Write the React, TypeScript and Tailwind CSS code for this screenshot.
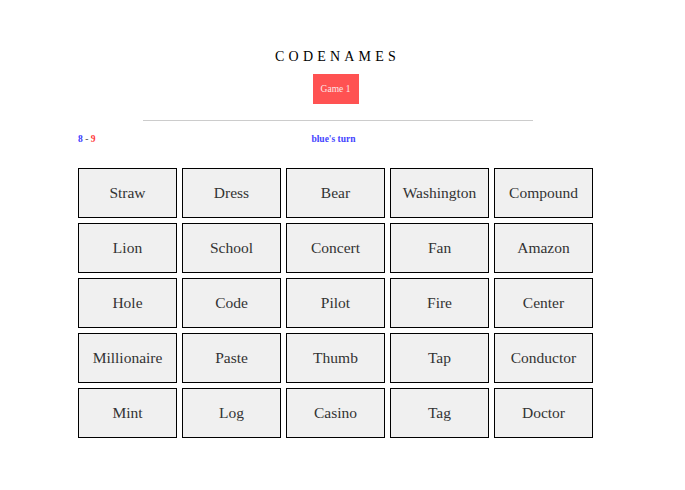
import React from "react";

const words = [
  "Straw", "Dress", "Bear", "Washington", "Compound",
  "Lion", "School", "Concert", "Fan", "Amazon",
  "Hole", "Code", "Pilot", "Fire", "Center",
  "Millionaire", "Paste", "Thumb", "Tap", "Conductor",
  "Mint", "Log", "Casino", "Tag", "Doctor",
];

export default function App() {
  return (
    <div className="min-h-[490px] w-full bg-white" style={{ fontFamily: '"Liberation Serif", serif' }}>
      <div className="ml-[78px] w-[515px] pt-[49px]">
        <div className="flex flex-col items-center">
          <h1 className="text-[14px] leading-[16px] tracking-[4.2px] pl-[4px] text-black">CODENAMES</h1>
          <button className="mt-[9px] h-[30px] w-[46px] bg-[#ff5252] text-[9.5px] text-[#fde8e8]">Game 1</button>
        </div>
        <div className="ml-[65px] mt-[16px] h-px w-[390px] bg-[#cccccc]" />
        <div className="mt-[11px] grid grid-cols-3 text-[9.5px] font-bold leading-[14px]">
          <div>
            <span className="text-[#3a3aff]">8</span>
            <span className="text-[#666]"> - </span>
            <span className="text-[#ff3a3a]">9</span>
          </div>
          <div className="pr-[4px] text-center text-[#4444ff]">blue's turn</div>
          <div />
        </div>
        <div className="mt-[22px] grid grid-cols-[repeat(5,99px)] gap-[5px]">
          {words.map((w) => (
            <div
              key={w}
              className="flex h-[50px] items-center justify-center border border-black bg-[#f0f0f0] text-[15.5px] text-[#333]"
            >
              {w}
            </div>
          ))}
        </div>
      </div>
    </div>
  );
}
